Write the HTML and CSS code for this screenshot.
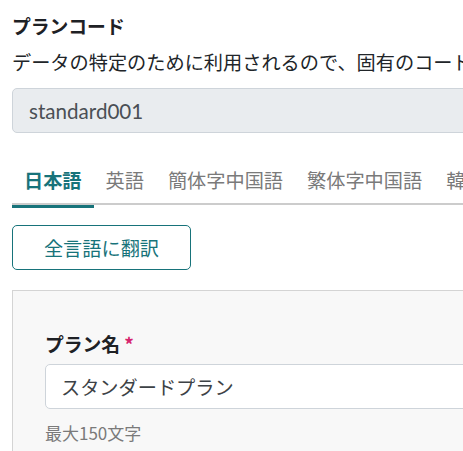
FILE: index.html
```html
<!DOCTYPE html>
<html lang="ja">
<head>
<meta charset="utf-8">
<link rel="stylesheet" href="styles.css">
</head>
<body>
<div class="page">
  <h2 class="title">プランコード</h2>
  <p class="desc">データの特定のために利用されるので、固有のコードを入力してください</p>
  <div class="code-input">standard001</div>

  <nav class="tabs">
    <span class="tab active">日本語</span>
    <span class="tab">英語</span>
    <span class="tab">簡体字中国語</span>
    <span class="tab">繁体字中国語</span>
    <span class="tab">韓国語</span>
  </nav>

  <button class="translate-btn">全言語に翻訳</button>

  <section class="panel">
    <div class="label">プラン名<span class="req">*</span></div>
    <div class="name-input">スタンダードプラン</div>
    <div class="hint">最大150文字</div>
  </section>
</div>
</body>
</html>
```

FILE: styles.css
```css
html, body {
  margin: 0;
  padding: 0;
  background: #ffffff;
  overflow: hidden;
}

body {
  font-family: "Noto Sans CJK JP", "Noto Sans", sans-serif;
  color: #212529;
  width: 463px;
  height: 451px;
}

.page {
  padding: 12px 0 0 12px;
  width: 700px;
}

.title {
  margin: 0;
  font-size: 18.8px;
  font-weight: 700;
  line-height: 28px;
  color: #1e2125;
}

.desc {
  margin: 8px 0 0;
  font-size: 19.2px;
  line-height: 28px;
  white-space: nowrap;
  color: #212529;
}

.code-input {
  margin-top: 12px;
  height: 45px;
  box-sizing: border-box;
  border: 1px solid #ced4da;
  border-radius: 5px;
  background: #e9ecef;
  padding: 0 16px;
  display: flex;
  align-items: center;
  font-family: "Lato", "Noto Sans", sans-serif;
  font-size: 20.6px;
  color: #4a4f55;
}

.tabs {
  margin-top: 20px;
  display: flex;
  border-bottom: 2px solid #cccccc;
  white-space: nowrap;
}

.tab {
  position: relative;
  padding: 13px 12px 9px;
  font-size: 19.2px;
  line-height: 28px;
  color: #7a7a7a;
}

.tab.active {
  color: #17737a;
  font-weight: 700;
}

.tab.active::after {
  content: "";
  position: absolute;
  left: 0;
  right: 0;
  bottom: -5px;
  height: 3px;
  background: #17737a;
}

.translate-btn {
  display: flex;
  align-items: center;
  justify-content: center;
  margin-top: 20px;
  width: 179px;
  height: 45px;
  box-sizing: border-box;
  border: 1px solid #17737a;
  border-radius: 5px;
  background: #ffffff;
  color: #17737a;
  font-family: "Noto Sans CJK JP", "Noto Sans", sans-serif;
  font-size: 19.2px;
  line-height: 28px;
  padding: 0;
}

.panel {
  margin-top: 20px;
  border: 1px solid #d4d4d4;
  background: #f8f8f8;
  padding: 39px 0 20px 32px;
}

.label {
  font-size: 18.8px;
  font-weight: 700;
  line-height: 28px;
  color: #1e2125;
}

.req {
  color: #d6246e;
  margin-left: 4px;
  font-weight: 700;
}

.name-input {
  margin-top: 6px;
  height: 45px;
  box-sizing: border-box;
  border: 1px solid #ced4da;
  border-radius: 5px;
  background: #ffffff;
  padding: 0 15px;
  display: flex;
  align-items: center;
  font-size: 19.2px;
  color: #3d4246;
}

.hint {
  margin-top: 12px;
  font-size: 17px;
  line-height: 24px;
  color: #7a7a7a;
}
```
